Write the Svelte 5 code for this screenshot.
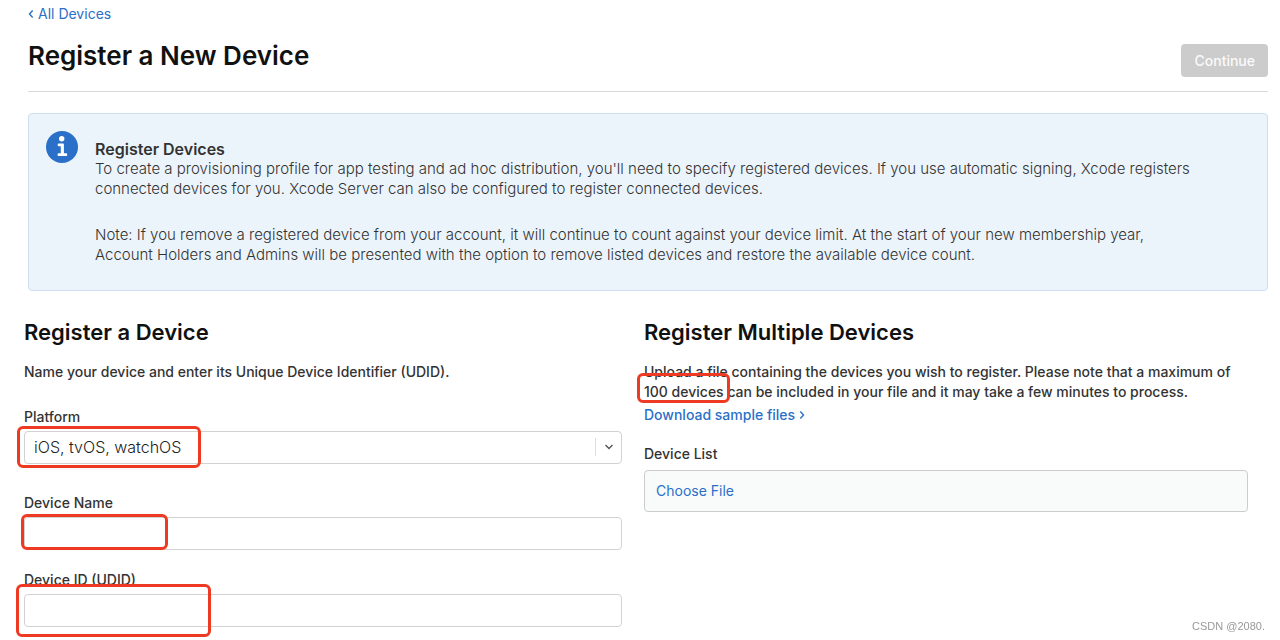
<script lang="ts">
	let platform = 'ios';
	let deviceName = '';
	let udid = '';
	let canContinue = false;
</script>

<div class="page">
	<header class="header">
		<a class="back" href="#devices">
			<svg width="6" height="9" viewBox="0 0 6 9" aria-hidden="true">
				<path d="M4.7 1.5 1.5 5 4.7 8.5" />
			</svg>
			All Devices
		</a>
		<div class="title-row">
			<h1>Register a New Device</h1>
			<button class="continue" type="submit" form="device-form" disabled={!canContinue}>
				Continue
			</button>
		</div>
	</header>

	<section class="callout">
		<svg class="info" width="32" height="32" viewBox="0 0 32 32" aria-hidden="true">
			<circle class="info-disc" cx="16" cy="16" r="16" />
			<circle cx="15.7" cy="7.8" r="2.7" />
			<path
				d="M12.6 12.6h4.6q.7 0 .7.7v9h2.4q.9 0 .9.9v.8q0 .9-.9.9h-7.8q-.9 0-.9-.9v-.8q0-.9.9-.9h2.3v-7.1h-2.2q-.9 0-.9-.9v-.8q0-.9.9-.9z"
			/>
		</svg>
		<div class="callout-text">
			<h2>Register Devices</h2>
			<p>
				To create a provisioning profile for app testing and ad hoc distribution, you'll need to
				specify registered devices. If you use automatic signing, Xcode registers<br />
				connected devices for you. Xcode Server can also be configured to register connected devices.
			</p>
			<p>
				Note: If you remove a registered device from your account, it will continue to count against
				your device limit. At the start of your new membership year,<br />
				Account Holders and Admins will be presented with the option to remove listed devices and restore
				the available device count.
			</p>
		</div>
	</section>

	<main class="columns">
		<form class="column single" id="device-form">
			<h2>Register a Device</h2>
			<p>Name your device and enter its Unique Device Identifier (UDID).</p>

			<div class="field platform">
				<label for="platform">Platform</label>
				<div class="select">
					<select id="platform" bind:value={platform}>
						<option value="ios">iOS, tvOS, watchOS</option>
						<option value="macos">macOS</option>
					</select>
					<span class="arrow">
						<svg width="10" height="6" viewBox="0 0 10 6" aria-hidden="true">
							<path d="M1.5 1 5 4.5 8.5 1" />
						</svg>
					</span>
				</div>
				<span class="mark mark-platform"></span>
			</div>

			<div class="field name">
				<label for="device-name">Device Name</label>
				<input id="device-name" type="text" bind:value={deviceName} />
				<span class="mark mark-name"></span>
			</div>

			<div class="field">
				<label for="udid">Device ID (UDID)</label>
				<input id="udid" type="text" bind:value={udid} />
				<span class="mark mark-udid"></span>
			</div>
		</form>

		<section class="column multiple">
			<h2>Register Multiple Devices</h2>
			<div class="upload-note">
				<p>
					Upload a file containing the devices you wish to register. Please note that a maximum of
					100 devices can be included in your file and it may take a few minutes to process.
				</p>
				<span class="mark mark-limit"></span>
			</div>
			<a class="sample" href="#sample">
				Download sample files
				<svg width="6" height="9" viewBox="0 0 6 9" aria-hidden="true">
					<path d="M1.3 1.5 4.5 5 1.3 8.5" />
				</svg>
			</a>
			<span class="list-label" id="list-label">Device List</span>
			<div class="file-box">
				<button class="choose" type="button" aria-describedby="list-label">Choose File</button>
			</div>
		</section>
	</main>

	<span class="watermark">CSDN @2080.</span>
</div>

<style>
	:global(body) {
		margin: 0;
		background: #fff;
	}

	.page {
		box-sizing: border-box;
		min-height: 100vh;
		font-family: Inter, 'Liberation Sans', sans-serif;
		font-size: 14px;
		line-height: 20px;
		font-weight: 500;
		color: #333;
	}

	h1,
	h2,
	p {
		margin: 0;
	}

	a {
		color: #2a70c8;
		text-decoration: none;
	}

	a svg {
		fill: none;
		stroke: currentColor;
		stroke-width: 1.4;
	}

	input,
	select,
	button {
		box-sizing: border-box;
		font-family: inherit;
		margin: 0;
	}

	.header {
		margin: 0 12px 0 28px;
		padding: 3px 0 14px;
		border-bottom: 1px solid #d9d9dc;
	}

	.back {
		display: inline-flex;
		align-items: center;
		gap: 4px;
		font-weight: 400;
	}

	.title-row {
		display: flex;
		justify-content: space-between;
		align-items: flex-end;
		padding-top: 16px;
	}

	h1 {
		font-size: 26px;
		line-height: 32px;
		font-weight: 600;
		color: #111;
		padding-bottom: 5px;
	}

	.continue {
		height: 33px;
		padding: 0 13px;
		border: none;
		border-radius: 4px;
		background: #ccc;
		color: #fafafa;
		font-size: 14px;
		font-weight: 500;
	}

	.callout {
		display: flex;
		gap: 17px;
		margin: 21px 12px 0 28px;
		padding: 17px 32px 25px 17px;
		border: 1px solid #cfdff0;
		border-radius: 4px;
		background: #ecf4fb;
	}

	.info {
		flex: none;
		fill: #fff;
	}

	.info-disc {
		fill: #2a70c8;
	}

	.callout-text {
		padding-top: 8px;
	}

	.callout-text h2 {
		font-size: 16px;
		line-height: 20px;
		font-weight: 600;
	}

	.callout-text p {
		font-size: 15px;
		font-weight: 300;
	}

	.callout-text p + p {
		padding-top: 26px;
	}

	.columns {
		display: grid;
		grid-template-columns: 1fr 1fr;
		padding: 27px 16px 0 24px;
	}

	.column h2 {
		font-size: 22px;
		line-height: 28px;
		font-weight: 600;
		color: #111;
		padding-bottom: 16px;
	}

	.single {
		padding-right: 22px;
	}

	.multiple {
		display: flex;
		flex-direction: column;
		align-items: flex-start;
		padding-right: 16px;
	}

	.field {
		position: relative;
		display: flex;
		flex-direction: column;
		gap: 4px;
	}

	.platform {
		padding: 25px 0 29px;
	}

	.name {
		padding-bottom: 20px;
	}

	input,
	select {
		width: 100%;
		height: 33px;
		padding: 0 9px;
		border: 1px solid #d2d2d2;
		border-radius: 4px;
		background: #fff;
		color: #222;
		font-size: 16px;
		font-weight: 300;
	}

	select {
		appearance: none;
	}

	.select {
		display: grid;
	}

	.select select,
	.arrow {
		grid-area: 1 / 1;
	}

	.arrow {
		display: flex;
		align-items: center;
		justify-self: end;
		align-self: center;
		height: 18px;
		padding: 0 8px;
		border-left: 1px solid #ddd;
		pointer-events: none;
	}

	.arrow svg {
		fill: none;
		stroke: #555;
		stroke-width: 1.4;
	}

	.upload-note {
		position: relative;
	}

	.sample {
		display: flex;
		align-items: center;
		gap: 4px;
		padding: 3px 0 19px;
	}

	.file-box {
		display: flex;
		align-items: center;
		box-sizing: border-box;
		width: 100%;
		height: 42px;
		margin-top: 6px;
		padding: 0 11px;
		border: 1px solid #ccc;
		border-radius: 4px;
		background: #f9fbfb;
	}

	.choose {
		padding: 0;
		border: none;
		background: none;
		color: #2a70c8;
		font-size: 14px;
		line-height: 20px;
		font-weight: 400;
	}

	/* red highlight frames over the fields */
	.mark {
		position: absolute;
		box-sizing: border-box;
		border: 3px solid #ee3a22;
		border-radius: 6px;
		pointer-events: none;
	}

	.mark-platform {
		left: -7px;
		top: 44px;
		width: 184px;
		height: 42px;
	}

	.mark-name {
		left: -3px;
		top: 21px;
		width: 147px;
		height: 36px;
	}

	.mark-udid {
		left: -8px;
		top: 14px;
		width: 195px;
		height: 53px;
	}

	.mark-limit {
		left: -7px;
		top: 11px;
		width: 93px;
		height: 30px;
	}

	.watermark {
		position: fixed;
		right: 15px;
		bottom: 6px;
		font-family: 'Liberation Sans', sans-serif;
		font-size: 11px;
		line-height: 16px;
		font-weight: 400;
		color: #999;
	}
</style>
